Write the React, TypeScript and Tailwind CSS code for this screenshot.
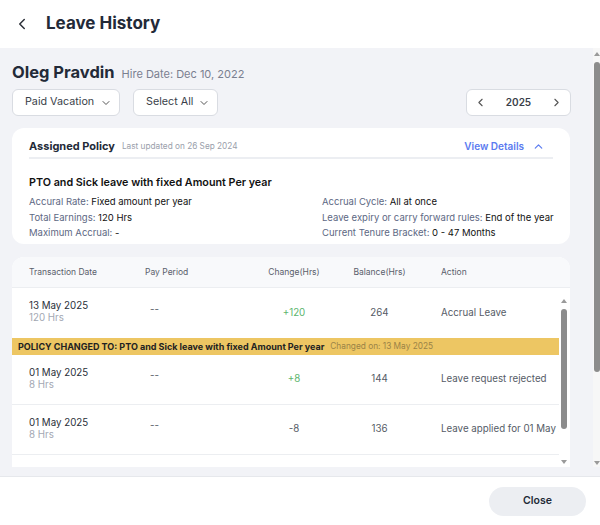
import { ChevronDown, ChevronLeft, ChevronRight, ChevronUp } from "lucide-react";

interface Txn {
  date: string;
  hrs: string;
  period: string;
  change: string;
  positive: boolean;
  balance: string;
  action: string;
}

const ROWS: Txn[] = [
  { date: "13 May 2025", hrs: "120 Hrs", period: "--", change: "+120", positive: true, balance: "264", action: "Accrual Leave" },
  { date: "01 May 2025", hrs: "8 Hrs", period: "--", change: "+8", positive: true, balance: "144", action: "Leave request rejected" },
  { date: "01 May 2025", hrs: "8 Hrs", period: "--", change: "-8", positive: false, balance: "136", action: "Leave applied for 01 May 2025" },
];

const GRID = "grid grid-cols-[116px_105px_88px_83px_1fr]";

function Scrollbar({ thumbTop, thumbHeight }: { thumbTop: number; thumbHeight: number }) {
  return (
    <div className="relative w-[7px] h-full">
      <div className="absolute top-[2px] left-[1px] w-0 h-0 border-l-[3px] border-r-[3px] border-b-[4px] border-l-transparent border-r-transparent border-b-[#9a9a9a]" />
      <div
        className="absolute left-[1px] w-[6px] rounded-full bg-[#8c8c8c]"
        style={{ top: thumbTop, height: thumbHeight }}
      />
      <div className="absolute bottom-[2px] left-[1px] w-0 h-0 border-l-[3px] border-r-[3px] border-t-[4px] border-l-transparent border-r-transparent border-t-[#9a9a9a]" />
    </div>
  );
}

function Field({ label, value }: { label: string; value: string }) {
  return (
    <p className="h-[15.5px] leading-[15.5px] whitespace-nowrap">
      <span className="text-[#5d6883]">{label}: </span>
      <span className="text-[#111]">{value}</span>
    </p>
  );
}

function Row({ row, last }: { row: Txn; last?: boolean }) {
  return (
    <div className={`${GRID} h-[50px] items-center pl-[17px] text-[9.75px] ${last ? "border-b border-[#eceef1]" : ""}`}>
      <div className="leading-[12px] -mt-[2px]">
        <p className="text-[#2a2f3a]">{row.date}</p>
        <p className="text-[#a3a8b3]">{row.hrs}</p>
      </div>
      <p className="pl-[5px] text-[#555b66] -mt-[6px]">{row.period}</p>
      <p className={`text-center ${row.positive ? "text-[#5cb56e]" : "text-[#555b66]"}`}>{row.change}</p>
      <p className="text-center text-[#555b66]">{row.balance}</p>
      <p className="pl-5 text-[#555b66] whitespace-nowrap">{row.action}</p>
    </div>
  );
}

export default function App() {
  return (
    <div className="w-[600px] h-[525px] flex flex-col bg-white overflow-hidden font-['Inter',sans-serif] text-[#1f2533]">
      <header className="h-[48px] shrink-0 flex items-center pl-[13px] gap-[15px]">
        <ChevronLeft size={18} strokeWidth={2} className="text-[#2b2f38]" />
        <h1 className="text-[17px] font-bold text-[#232a38]">Leave History</h1>
      </header>

      <div className="h-[429px] shrink-0 bg-[#f2f3f7] flex flex-col border-b border-[#e6e8ec]">
        <div className="h-[419px] flex">
          <div className="flex-1 min-w-0 overflow-hidden pl-3">
            <div className="flex items-baseline gap-[7px] pt-3 h-[36px]">
              <h2 className="text-[16.5px] font-bold text-[#232a38]">Oleg Pravdin</h2>
              <span className="text-[11px] text-[#7a8090]">Hire Date: Dec 10, 2022</span>
            </div>

            <div className="flex items-center mt-[5px] w-[558px]">
              <button className="h-[27px] w-[108px] flex items-center pl-3 pr-[7px] bg-white border border-[#d9dce2] rounded-md text-[10.75px] text-[#3a3f4a]">
                Paid Vacation
                <ChevronDown size={12} className="ml-auto text-[#555]" />
              </button>
              <button className="ml-[13px] h-[27px] w-[85px] flex items-center pl-3 pr-[7px] bg-white border border-[#d9dce2] rounded-md text-[10.75px] text-[#3a3f4a]">
                Select All
                <ChevronDown size={12} className="ml-auto text-[#555]" />
              </button>
              <div className="ml-auto -mr-px h-[27px] w-[105px] flex items-center justify-between px-[7px] bg-white border border-[#d9dce2] rounded-md">
                <ChevronLeft size={13} className="text-[#555]" />
                <span className="text-[10px] font-semibold text-[#3a3f4a]">2025</span>
                <ChevronRight size={13} className="text-[#555]" />
              </div>
            </div>

            <section className="mt-3 w-[558px] h-[116px] bg-white rounded-xl px-[17px] pt-2">
              <div className="h-[20px] flex items-center">
                <h3 className="text-[11px] font-bold text-[#232a38]">Assigned Policy</h3>
                <span className="ml-[7px] text-[8.25px] text-[#9aa0ab]">Last updated on 26 Sep 2024</span>
                <button className="ml-auto mr-[8px] flex items-center gap-[8px] text-[10px] font-semibold text-[#5b7bf0]">
                  View Details
                  <ChevronUp size={13} strokeWidth={2.2} />
                </button>
              </div>
              <div className="mt-px h-[2px] bg-[#eceef2]" />
              <p className="mt-[14px] text-[10.75px] font-semibold text-[#111] leading-[20px]">
                PTO and Sick leave with fixed Amount Per year
              </p>
              <div className="grid grid-cols-[293px_1fr] text-[9.5px] mt-px">
                <div>
                  <Field label="Accural Rate" value="Fixed amount per year" />
                  <Field label="Total Earnings" value="120 Hrs" />
                  <Field label="Maximum Accrual" value="-" />
                </div>
                <div>
                  <Field label="Accrual Cycle" value="All at once" />
                  <Field label="Leave expiry or carry forward rules" value="End of the year" />
                  <Field label="Current Tenure Bracket" value="0 - 47 Months" />
                </div>
              </div>
            </section>

            <section className="mt-[13px] w-[558px] h-[210px] bg-white rounded-t-xl overflow-hidden flex flex-col">
              <div className={`${GRID} h-[31px] shrink-0 items-center pl-[17px] bg-[#f8f9fb] border-b border-[#eceef1] text-[8.5px] text-[#5a606b]`}>
                <span>Transaction Date</span>
                <span>Pay Period</span>
                <span className="text-center">Change(Hrs)</span>
                <span className="text-center">Balance(Hrs)</span>
                <span className="pl-5">Action</span>
              </div>
              <div className="flex-1 min-h-0 flex">
                <div className="flex-1 min-w-0 overflow-hidden">
                  <Row row={ROWS[0]} />
                  <div className="h-[17px] flex items-center bg-[#edc663] pl-[6px] gap-[6px] whitespace-nowrap">
                    <span className="text-[9px] font-bold text-[#222]">
                      POLICY CHANGED TO: PTO and Sick leave with fixed Amount Per year
                    </span>
                    <span className="text-[8.3px] text-[#9a8347]">Changed on: 13 May 2025</span>
                  </div>
                  <Row row={ROWS[1]} last />
                  <Row row={ROWS[2]} last />
                </div>
                <div className="w-[11px] shrink-0 pl-[1px] pt-[9px] pb-[1px] h-full">
                  <Scrollbar thumbTop={12} thumbHeight={120} />
                </div>
              </div>
            </section>
          </div>
          <div className="w-[7px] shrink-0 bg-[#f7f7f7] pt-[2px]">
            <Scrollbar thumbTop={12} thumbHeight={310} />
          </div>
        </div>
      </div>

      <footer className="flex-1 flex items-center justify-end pr-[14px]">
        <button className="h-[29px] w-[97px] rounded-full bg-[#eceef2] text-[10.5px] font-semibold text-[#222a36]">
          Close
        </button>
      </footer>
    </div>
  );
}
